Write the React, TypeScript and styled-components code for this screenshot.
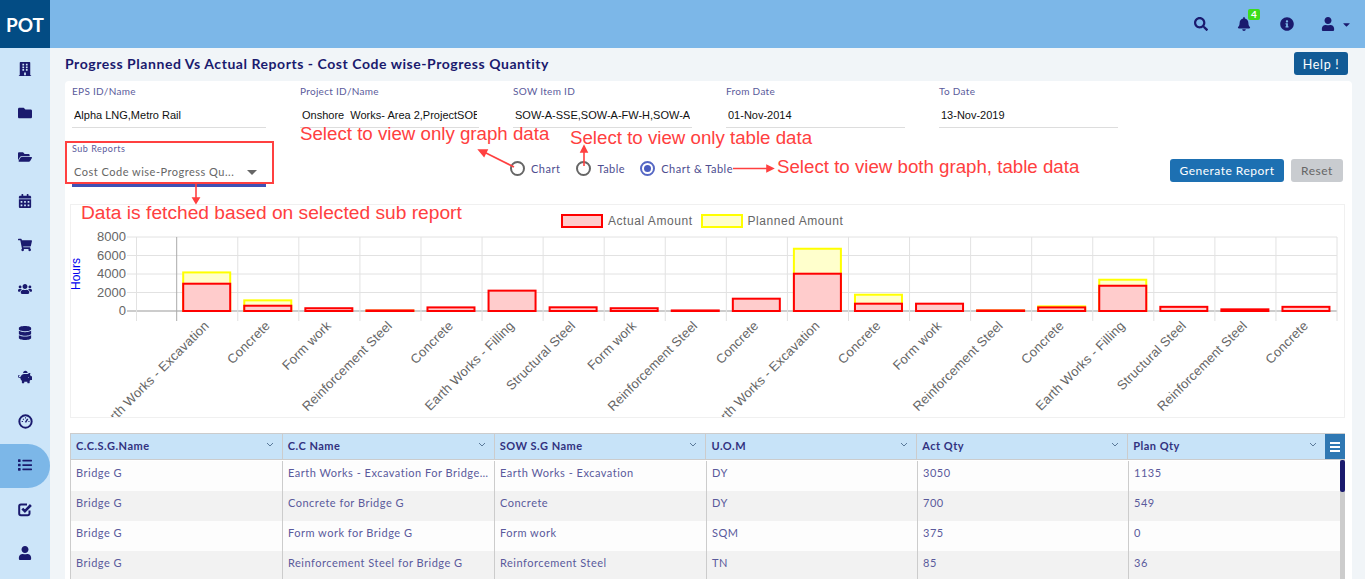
import React from "react";
import styled, { createGlobalStyle } from "styled-components";
import {
  FaBell,
  FaBuilding,
  FaCalendarAlt,
  FaCaretDown,
  FaDatabase,
  FaFolder,
  FaFolderOpen,
  FaInfoCircle,
  FaList,
  FaPiggyBank,
  FaSearch,
  FaShoppingCart,
  FaUser,
  FaUsers,
} from "react-icons/fa";

const NAVY = "#1a1a6e";
const RED = "#ff4040";

const GaugeIcon = () => (
  <svg width="15" height="15" viewBox="0 0 17 17" fill="none">
    <circle cx="8.5" cy="8.5" r="7" stroke={NAVY} strokeWidth="2.2" />
    <path d="M8.5 9.5 L11 5.5" stroke={NAVY} strokeWidth="1.6" />
    <path d="M4.2 8.5h1.4M5.6 5.4l1 1M8.5 3.8v1.4M11.8 8.5h1.2" stroke={NAVY} strokeWidth="1.2" />
  </svg>
);

const CheckIcon = () => (
  <svg width="15" height="15" viewBox="0 0 15 15" fill="none">
    <path d="M11.5 8.5v3a1.8 1.8 0 0 1-1.8 1.8H3a1.8 1.8 0 0 1-1.8-1.8V4.2A1.8 1.8 0 0 1 3 2.4h6" stroke={NAVY} strokeWidth="2" />
    <path d="M4.3 6.6l2.6 2.6 6-6.2" stroke={NAVY} strokeWidth="2.6" />
  </svg>
);

const navItems = [
  <FaBuilding />,
  <FaFolder />,
  <FaFolderOpen />,
  <FaCalendarAlt />,
  <FaShoppingCart />,
  <FaUsers />,
  <FaDatabase />,
  <FaPiggyBank />,
  <GaugeIcon />,
  <FaList />,
  <CheckIcon />,
  <FaUser />,
];

const filters = [
  { label: "EPS ID/Name", value: "Alpha LNG,Metro Rail", width: 194 },
  { label: "Project ID/Name", value: "Onshore  Works- Area 2,ProjectSOB", width: 179 },
  { label: "SOW Item ID", value: "SOW-A-SSE,SOW-A-FW-H,SOW-A", width: 179 },
  { label: "From Date", value: "01-Nov-2014", width: 179 },
  { label: "To Date", value: "13-Nov-2019", width: 179 },
];

const bars = [
  { name: "Earth Works - Excavation", actual: 2950, planned: 4170 },
  { name: "Concrete", actual: 570, planned: 1150 },
  { name: "Form work", actual: 300, planned: 0 },
  { name: "Reinforcement Steel", actual: 60, planned: 36 },
  { name: "Concrete", actual: 390, planned: 0 },
  { name: "Earth Works - Filling", actual: 2200, planned: 0 },
  { name: "Structural Steel", actual: 400, planned: 0 },
  { name: "Form work", actual: 300, planned: 0 },
  { name: "Reinforcement Steel", actual: 60, planned: 0 },
  { name: "Concrete", actual: 1330, planned: 0 },
  { name: "Earth Works - Excavation", actual: 4030, planned: 6730 },
  { name: "Concrete", actual: 790, planned: 1760 },
  { name: "Form work", actual: 790, planned: 0 },
  { name: "Reinforcement Steel", actual: 60, planned: 50 },
  { name: "Concrete", actual: 390, planned: 500 },
  { name: "Earth Works - Filling", actual: 2730, planned: 3380 },
  { name: "Structural Steel", actual: 450, planned: 0 },
  { name: "Reinforcement Steel", actual: 180, planned: 0 },
  { name: "Concrete", actual: 450, planned: 0 },
];

const columns = [
  { title: "C.C.S.G.Name", width: 212 },
  { title: "C.C Name", width: 212 },
  { title: "SOW S.G Name", width: 212 },
  { title: "U.O.M", width: 211 },
  { title: "Act Qty", width: 211 },
  { title: "Plan Qty", width: 197 },
];

const rows = [
  ["Bridge G", "Earth Works - Excavation For Bridge G", "Earth Works - Excavation", "DY", "3050", "1135"],
  ["Bridge G", "Concrete for Bridge G", "Concrete", "DY", "700", "549"],
  ["Bridge G", "Form work for Bridge G", "Form work", "SQM", "375", "0"],
  ["Bridge G", "Reinforcement Steel for Bridge G", "Reinforcement Steel", "TN", "85", "36"],
];

const X0 = 176.7;
const STEP = 61.07;
const Y0 = 311;
const yFor = (v: number) => Y0 - (v / 8000) * 74;

const Chart = () => (
  <ChartSvg width="1275" height="212" viewBox="71 205 1275 212">
    {[0, 2000, 4000, 6000, 8000].map((v) => (
      <React.Fragment key={v}>
        <line x1="127" x2="1337" y1={yFor(v)} y2={yFor(v)} stroke={v === 0 ? "#999" : "#e2e2e2"} />
        <text x="126" y={yFor(v) + 4} textAnchor="end" fontSize="13" fill="#666">
          {v}
        </text>
      </React.Fragment>
    ))}
    <line x1="136.5" x2="136.5" y1="237" y2="321" stroke="#e2e2e2" />
    {bars.map((b, i) => (
      <line
        key={i}
        x1={X0 + i * STEP}
        x2={X0 + i * STEP}
        y1="237"
        y2="321"
        stroke={i === 0 ? "#aaa" : "#e2e2e2"}
      />
    ))}
    <line x1={X0 + 19 * STEP} x2={X0 + 19 * STEP} y1="237" y2="321" stroke="#e2e2e2" />
    <text
      transform="translate(80 274) rotate(-90)"
      textAnchor="middle"
      fontSize="12"
      fill="#0000ee"
    >
      Hours
    </text>
    {bars.map((b, i) => {
      const left = X0 + i * STEP + 6.5;
      return (
        <g key={i}>
          {b.planned > 0 && (
            <rect
              x={left}
              y={yFor(b.planned)}
              width="47"
              height={Y0 - yFor(b.planned)}
              fill="#ffffcc"
              stroke="#ffff00"
              strokeWidth="2"
            />
          )}
          <rect
            x={left}
            y={yFor(b.actual)}
            width="47"
            height={Y0 - yFor(b.actual)}
            fill="#ffcccc"
            stroke="#ff0000"
            strokeWidth="2"
          />
          <text
            transform={`translate(${left + 26.5} 326.5) rotate(-45)`}
            textAnchor="end"
            fontSize="13"
            letterSpacing="0.15"
            fill="#666"
          >
            {b.name}
          </text>
        </g>
      );
    })}
  </ChartSvg>
);

const Arrows = () => (
  <ArrowLayer width="1365" height="579" viewBox="0 0 1365 579">
    <g stroke={RED} strokeWidth="1.6" fill={RED}>
      <line x1="514" y1="167" x2="484" y2="152" />
      <polygon points="479,150 487,150 484,156" />
      <line x1="584" y1="166" x2="584" y2="149" />
      <polygon points="584,146 581,152 587,152" />
      <line x1="733" y1="168.5" x2="768" y2="168.5" />
      <polygon points="773,168.5 767,165.5 767,171.5" />
      <line x1="196" y1="184" x2="196" y2="199" />
      <polygon points="196,203 193,198 199,198" />
    </g>
  </ArrowLayer>
);

const App: React.FC = () => (
  <Page>
    <GlobalStyle />
    <TopBar>
      <Logo>POT</Logo>
      <TopActions>
        <TopIcon>
          <FaSearch />
        </TopIcon>
        <TopIcon>
          <FaBell />
          <Badge>4</Badge>
        </TopIcon>
        <TopIcon>
          <FaInfoCircle />
        </TopIcon>
        <UserMenu>
          <FaUser />
          <FaCaretDown />
        </UserMenu>
      </TopActions>
    </TopBar>
    <Body>
      <SideNav>
        {navItems.map((icon, i) => (
          <NavItem key={i} $active={i === 9}>
            {icon}
          </NavItem>
        ))}
      </SideNav>
      <Main>
        <TitleRow>
          <Title>Progress Planned Vs Actual Reports - Cost Code wise-Progress Quantity</Title>
          <HelpButton>Help !</HelpButton>
        </TitleRow>
        <Panel>
          <FilterRow>
            {filters.map((f) => (
              <Field key={f.label} $width={f.width}>
                <FieldLabel>{f.label}</FieldLabel>
                <FieldValue>{f.value}</FieldValue>
              </Field>
            ))}
          </FilterRow>
          <ControlRow>
            <SubReports>
              <SubLabel>Sub Reports</SubLabel>
              <SelectValue>
                <span>Cost Code wise-Progress Qu...</span>
                <SelectCaret />
              </SelectValue>
            </SubReports>
            <RadioGroup>
              <RadioItem $gap={16}>
                <Radio />
                Chart
              </RadioItem>
              <RadioItem $gap={15}>
                <Radio />
                Table
              </RadioItem>
              <RadioItem $gap={0}>
                <Radio $checked />
                Chart &amp; Table
              </RadioItem>
            </RadioGroup>
            <Buttons>
              <GenerateButton>Generate Report</GenerateButton>
              <ResetButton>Reset</ResetButton>
            </Buttons>
          </ControlRow>
          <ChartBox>
            <Legend>
              <LegendSwatch $fill="#ffcccc" $line="#ff0000" />
              <LegendText>Actual Amount</LegendText>
              <LegendSwatch $fill="#ffffcc" $line="#ffff00" />
              <LegendText>Planned Amount</LegendText>
            </Legend>
            <Chart />
          </ChartBox>
          <Table>
            <HeaderRow>
              {columns.map((c) => (
                <HeaderCell key={c.title} $width={c.width}>
                  {c.title}
                  <Chevron width="8" height="5" viewBox="0 0 8 5">
                    <path d="M1 1l3 3 3-3" fill="none" stroke="#5a7a9a" strokeWidth="1" />
                  </Chevron>
                </HeaderCell>
              ))}
              <MenuButton>
                <span />
                <span />
                <span />
              </MenuButton>
            </HeaderRow>
            <TableBody>
              {rows.map((row, r) => (
                <DataRow key={r} $shaded={r % 2 === 1}>
                  {row.map((cell, c) => (
                    <DataCell key={c} $width={columns[c].width}>
                      {cell}
                    </DataCell>
                  ))}
                </DataRow>
              ))}
              <ScrollTrack>
                <ScrollThumb />
              </ScrollTrack>
            </TableBody>
          </Table>
        </Panel>
      </Main>
    </Body>

    <Arrows />
    <SubReportsOutline />
    <Note $x={300} $y={123}>Select to view only graph data</Note>
    <Note $x={570} $y={127}>Select to view only table data</Note>
    <Note $x={777} $y={156}>Select to view both graph, table data</Note>
    <Note $x={81} $y={202} $size={19.2}>Data is fetched based on selected sub report</Note>
  </Page>
);

const GlobalStyle = createGlobalStyle`
  html, body {
    margin: 0;
    padding: 0;
    height: 100%;
    overflow: hidden;
    background: #f1f5f8;
    font-family: Lato, "Liberation Sans", sans-serif;
  }
  * { box-sizing: border-box; }
`;

const Page = styled.div`
  position: relative;
  width: 1365px;
  height: 579px;
  overflow: hidden;
  display: flex;
  flex-direction: column;
`;

const TopBar = styled.header`
  flex: 0 0 48px;
  display: flex;
  align-items: center;
  justify-content: space-between;
  background: #7cb7e8;
`;

const Logo = styled.div`
  width: 50px;
  height: 48px;
  display: flex;
  align-items: center;
  justify-content: center;
  background: #034c84;
  color: #fff;
  font-size: 19px;
  font-weight: 700;
`;

const TopActions = styled.div`
  display: flex;
  align-items: center;
  padding-right: 13px;
`;

const TopIcon = styled.div`
  position: relative;
  width: 43px;
  display: flex;
  align-items: center;
  justify-content: center;
  color: ${NAVY};
  font-size: 14px;
`;

const UserMenu = styled(TopIcon)`
  width: 32px;
  margin-left: 12px;
  gap: 6px;

  svg:last-child {
    font-size: 11px;
  }
`;

const Badge = styled.span`
  position: absolute;
  top: -8px;
  left: 26px;
  width: 12px;
  height: 11px;
  border-radius: 2px;
  background: #3ddc1a;
  color: #fff;
  font-size: 10px;
  font-weight: 700;
  line-height: 11px;
  text-align: center;
`;

const Body = styled.div`
  flex: 1;
  display: flex;
  min-height: 0;
`;

const SideNav = styled.nav`
  flex: 0 0 50px;
  background: #cce5f9;
`;

const NavItem = styled.div<{ $active?: boolean }>`
  height: 44px;
  display: flex;
  align-items: center;
  padding: 0 0 2px 18px;
  color: ${NAVY};
  font-size: 14px;
  background: ${({ $active }) => ($active ? "#7cb7e8" : "transparent")};
  border-radius: ${({ $active }) => ($active ? "0 22px 22px 0" : "0")};
`;

const Main = styled.main`
  flex: 1;
  padding: 0 13px 0 15px;
  min-width: 0;
`;

const TitleRow = styled.div`
  height: 33px;
  padding: 0 4px 2px 0;
  display: flex;
  align-items: center;
  justify-content: space-between;
`;

const Title = styled.h1`
  margin: 0;
  color: ${NAVY};
  font-size: 14px;
  font-weight: 700;
  letter-spacing: 0.55px;
`;

const HelpButton = styled.button`
  width: 54px;
  height: 23px;
  padding: 1px 0 0;
  border: 0;
  border-radius: 3px;
  background: #125b96;
  color: #fff;
  font: 400 12.5px Lato, sans-serif;
  letter-spacing: 0.7px;
`;

const Panel = styled.section`
  height: 500px;
  padding: 0 7px 0 5px;
  background: #fff;
  border-radius: 4px 4px 0 0;
`;

const FilterRow = styled.div`
  display: flex;
  gap: 34px;
  padding: 4px 0 0 2px;
`;

const Field = styled.div<{ $width: number }>`
  width: ${({ $width }) => $width}px;
  height: 43px;
  border-bottom: 1px solid #ddd;
`;

const FieldLabel = styled.div`
  height: 12px;
  color: #5b5b9b;
  font-size: 10px;
  line-height: 12px;
  letter-spacing: 0.3px;
`;

const SubLabel = styled(FieldLabel)`
  font-size: 9px;
  letter-spacing: 0.5px;
`;

const FieldValue = styled.div`
  margin: 11px 2px 0;
  overflow: hidden;
  white-space: pre;
  color: #111;
  font-family: "Liberation Sans", sans-serif;
  font-size: 11px;
  line-height: 14px;
`;

const ControlRow = styled.div`
  display: flex;
  align-items: flex-start;
  height: 76px;
  padding: 15px 2px 0;
`;

const SubReports = styled.div`
  flex: 0 0 194px;
  height: 44px;
  border-bottom: 3px solid #3f51b5;
`;

const SelectValue = styled.div`
  display: flex;
  align-items: center;
  justify-content: space-between;
  margin-top: 10px;
  padding: 0 9px 0 2px;
  color: #666;
  font-size: 11px;
  line-height: 14px;
  letter-spacing: 0.5px;
`;

const SelectCaret = styled.i`
  width: 0;
  height: 0;
  border-left: 5px solid transparent;
  border-right: 5px solid transparent;
  border-top: 5px solid #666;
`;

const RadioGroup = styled.div`
  display: flex;
  margin: 18px 0 0 244px;
`;

const RadioItem = styled.label<{ $gap: number }>`
  display: flex;
  align-items: center;
  gap: 6px;
  margin-right: ${({ $gap }) => $gap}px;
  color: #4d4d8f;
  font-size: 11px;
  letter-spacing: 0.5px;
`;

const Radio = styled.span<{ $checked?: boolean }>`
  position: relative;
  width: 15px;
  height: 15px;
  border-radius: 50%;
  border: 2px solid ${({ $checked }) => ($checked ? "#5668c4" : "#666")};

  &::after {
    content: "";
    display: ${({ $checked }) => ($checked ? "block" : "none")};
    position: absolute;
    inset: 2px;
    border-radius: 50%;
    background: #4a5dc0;
  }
`;

const Buttons = styled.div`
  margin: 16px 0 0 auto;
  display: flex;
  gap: 7px;
`;

const GenerateButton = styled.button`
  width: 114px;
  height: 23px;
  padding: 0;
  border: 0;
  border-radius: 3px;
  background: #1d70b2;
  color: #fff;
  font: 400 12px Lato, sans-serif;
  letter-spacing: 0.5px;
`;

const ResetButton = styled(GenerateButton)`
  width: 52px;
  background: #c9ccd0;
  color: #666;
`;

const ChartBox = styled.div`
  position: relative;
  height: 214px;
  border: 1px solid #f0f0f0;
`;

const ChartSvg = styled.svg`
  font-family: "Liberation Sans", sans-serif;
`;

const Legend = styled.div`
  position: absolute;
  top: 9px;
  left: 490px;
  display: flex;
  align-items: center;
`;

const LegendSwatch = styled.span<{ $fill: string; $line: string }>`
  width: 42px;
  height: 14px;
  margin-right: 5px;
  background: ${({ $fill }) => $fill};
  border: 2px solid ${({ $line }) => $line};
`;

const LegendText = styled.span`
  margin-right: 8px;
  color: #666;
  font-family: "Liberation Sans", sans-serif;
  font-size: 12px;
  letter-spacing: 0.55px;
`;

const Table = styled.div`
  width: 1275px;
  margin-top: 15px;
  border: 1px solid #ccc;
  border-bottom: 0;
  border-right: 0;
`;

const HeaderRow = styled.div`
  display: flex;
  height: 26px;
  background: #c7e3f8;
  border-bottom: 1px solid #ccc;
`;

const HeaderCell = styled.div<{ $width: number }>`
  position: relative;
  width: ${({ $width }) => $width}px;
  padding-left: 5px;
  border-right: 1px solid #ccc;
  color: #32327f;
  font-size: 11px;
  font-weight: 700;
  line-height: 24px;
  letter-spacing: 0.5px;

  &:nth-child(6) {
    border-right: 0;
  }
`;

const Chevron = styled.svg`
  position: absolute;
  top: 8px;
  right: 8px;
`;

const MenuButton = styled.div`
  width: 20px;
  height: 25px;
  display: flex;
  flex-direction: column;
  align-items: center;
  justify-content: center;
  gap: 2px;
  background: #2f78b3;

  span {
    width: 10px;
    height: 2px;
    background: #fff;
  }
`;

const TableBody = styled.div`
  position: relative;
  padding-top: 1px;
`;

const DataRow = styled.div<{ $shaded: boolean }>`
  display: flex;
  height: 30px;
  background: ${({ $shaded }) => ($shaded ? "#f2f2f2" : "#fdfdfd")};
`;

const DataCell = styled.div<{ $width: number }>`
  width: ${({ $width }) => $width}px;
  padding: 0 5px;
  overflow: hidden;
  white-space: nowrap;
  text-overflow: ellipsis;
  border-right: 1px solid #ccc;
  color: #5a5a9c;
  font-size: 11px;
  line-height: 24px;
  letter-spacing: 0.5px;

  &:nth-child(6) {
    border-right: 0;
  }
`;

const ScrollTrack = styled.div`
  position: absolute;
  top: 0;
  right: 0;
  bottom: 0;
  width: 5px;
  background: #ccc;
`;

const ScrollThumb = styled.div`
  height: 32px;
  border-radius: 2px;
  background: ${NAVY};
`;

const ArrowLayer = styled.svg`
  position: absolute;
  top: 0;
  left: 0;
  pointer-events: none;
`;

const SubReportsOutline = styled.div`
  position: absolute;
  top: 141px;
  left: 65px;
  width: 209px;
  height: 43px;
  border: 2px solid ${RED};
`;

const Note = styled.div<{ $x: number; $y: number; $size?: number }>`
  position: absolute;
  top: ${({ $y }) => $y}px;
  left: ${({ $x }) => $x}px;
  color: ${RED};
  font-family: "Liberation Sans", sans-serif;
  font-size: ${({ $size }) => $size ?? 18.7}px;
  line-height: 22px;
  white-space: nowrap;
`;

export default App;
